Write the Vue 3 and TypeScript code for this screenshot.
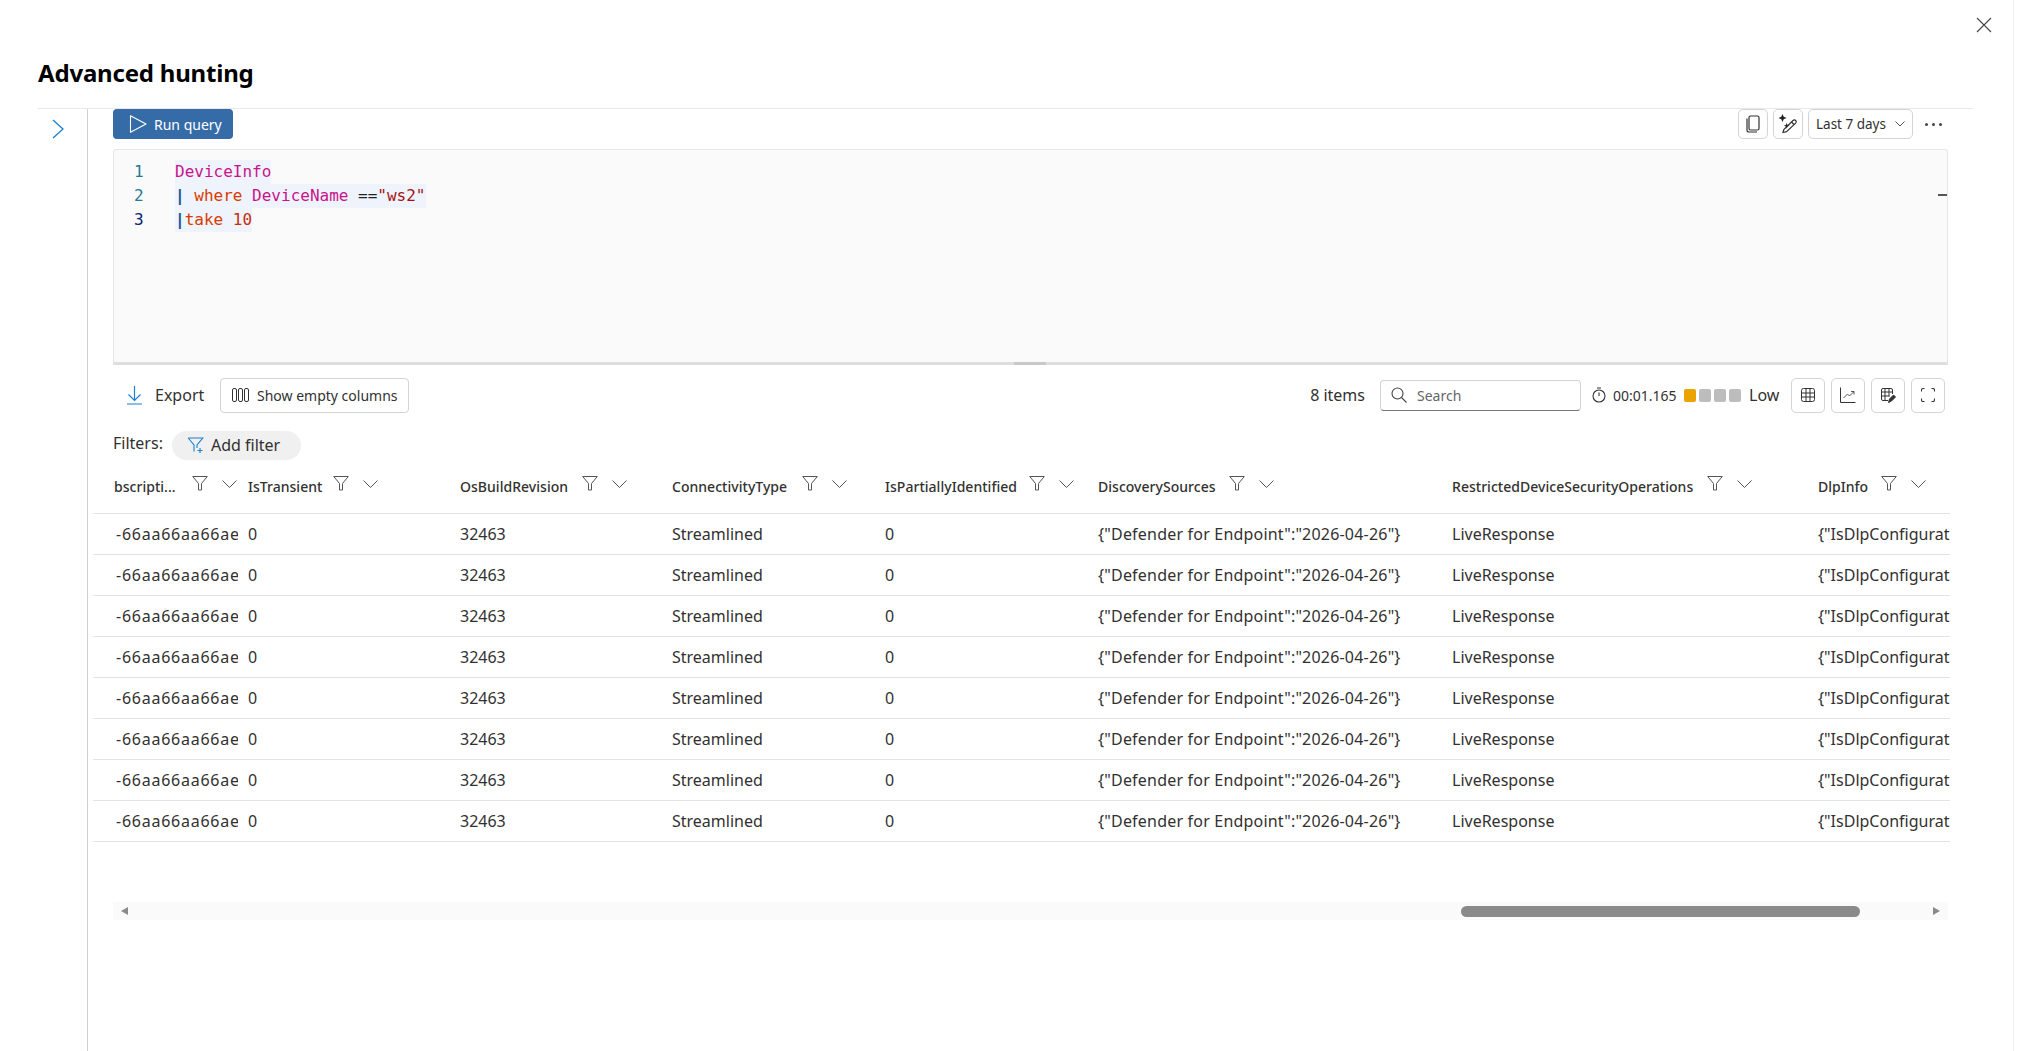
<script setup lang="ts">
interface Col { key: string; label: string; width: number; labelBox: number; value: string }
const cols: Col[] = [
  { key: 'sub', label: 'bscripti...', width: 147, labelBox: 77, value: '-66aa66aa66ae6' },
  { key: 'tr', label: 'IsTransient', width: 212, labelBox: 84, value: '0' },
  { key: 'os', label: 'OsBuildRevision', width: 212, labelBox: 121, value: '32463' },
  { key: 'con', label: 'ConnectivityType', width: 213, labelBox: 129, value: 'Streamlined' },
  { key: 'par', label: 'IsPartiallyIdentified', width: 213, labelBox: 143, value: '0' },
  { key: 'dis', label: 'DiscoverySources', width: 354, labelBox: 130, value: '{"Defender for Endpoint":"2026-04-26"}' },
  { key: 'res', label: 'RestrictedDeviceSecurityOperations', width: 366, labelBox: 254, value: 'LiveResponse' },
  { key: 'dlp', label: 'DlpInfo', width: 300, labelBox: 62, value: '{"IsDlpConfigurationEnabled":true}' },
]
const rows = Array.from({ length: 8 }, (_, i) => i)
</script>

<template>
  <div class="page">
    <button class="close" aria-label="Close">
      <svg width="16" height="16" viewBox="0 0 16 16"><path d="M1 1l14 14M15 1L1 15" stroke="#444" stroke-width="1.1" fill="none" /></svg>
    </button>
    <h1 class="title">Advanced hunting</h1>
    <div class="body">
      <aside class="side">
        <svg class="side-chev" width="12" height="20" viewBox="0 0 12 20"><path d="M1 1l10 9-10 9" stroke="#1b7fd1" stroke-width="1.3" fill="none" /></svg>
      </aside>
      <main class="main">
        <div class="qbar">
          <button class="run">
            <svg width="18" height="18" viewBox="0 0 18 18"><path d="M1.500 .8v16.400L17 9z" stroke="#fff" stroke-width="1.100" fill="none" stroke-linejoin="round" /></svg>
            <span>Run query</span>
          </button>
          <div class="qright">
            <button class="ibtn">
              <svg width="16" height="18" viewBox="0 0 16 18" fill="none" stroke="#333" stroke-width="1.200"><rect x="4" y="1" width="10" height="14" rx="1.500" /><path d="M2 3.500v11.500c0 1.200.8 2 2 2h8" /></svg>
            </button>
            <button class="ibtn">
              <svg width="20" height="20" viewBox="0 0 20 20" fill="none" stroke="#333" stroke-width="1.200"><path d="M4.500 0l1.200 2.800L8.500 4 5.700 5.200 4.500 8 3.300 5.200.5 4l2.800-1.200z" fill="#222" stroke="none" /><path d="M8.700 8.700l.8 2.200 2.200.8-2.200.8-.8 2.200-.8-2.200-2.200-.8 2.200-.8z" fill="#222" stroke="none" /><path d="M5 18.500l.8-3L15 6.500c.8-.8 2-.8 2.700 0s.7 1.900 0 2.600L8.500 17.700z" /><path d="M13.500 8l2.500 2.500" /></svg>
            </button>
            <button class="range">
              <span>Last 7 days</span>
              <svg width="10" height="6" viewBox="0 0 10 6"><path d="M.5.5L5 5 9.500.5" stroke="#555" stroke-width="1" fill="none" /></svg>
            </button>
            <div class="dots"><i></i><i></i><i></i></div>
          </div>
        </div>

        <div class="editor">
          <div class="eline"><span class="ln">1</span><span class="code"><span class="tbl">DeviceInfo</span></span></div>
          <div class="eline"><span class="ln">2</span><span class="code"><span class="pipe">|</span> <span class="kw">where</span> <span class="tbl">DeviceName</span> <span class="op">==</span><span class="str">"ws2"</span></span></div>
          <div class="eline"><span class="ln dark">3</span><span class="code"><span class="pipe">|</span><span class="kw">take</span> <span class="num">10</span> </span></div>
          <span class="mark"></span>
          <span class="grip"></span>
        </div>

        <div class="tools">
          <button class="export">
            <svg width="15" height="20" viewBox="0 0 15 20" fill="none" stroke="#1b7fd1" stroke-width="1.200"><path d="M7.500 1v14M1.500 9.500l6 6 6-6M0 19h15" /></svg>
            <span>Export</span>
          </button>
          <button class="empty">
            <svg width="18" height="14" viewBox="0 0 18 14" fill="none" stroke="#333" stroke-width="1"><rect x=".5" y=".5" width="4" height="13" rx="1.500" /><rect x="6.500" y=".5" width="4" height="13" rx="1.500" /><rect x="12.500" y=".5" width="4" height="13" rx="1.500" /></svg>
            <span>Show empty columns</span>
          </button>
          <div class="tools-right">
            <span class="items">8 items</span>
            <div class="search">
              <svg width="16" height="16" viewBox="0 0 16 16" fill="none" stroke="#444" stroke-width="1.100"><circle cx="6.500" cy="6.500" r="5.500" /><path d="M10.500 10.500l5 5" /></svg>
              <span>Search</span>
            </div>
            <svg class="timer" width="14" height="16" viewBox="0 0 14 16" fill="none" stroke="#333" stroke-width="1.100"><circle cx="7" cy="9" r="6" /><path d="M7 9V5.500M5 1h4" /></svg>
            <span class="time">00:01.165</span>
            <div class="bars"><i class="on"></i><i></i><i></i><i></i></div>
            <span class="low">Low</span>
            <button class="sq">
              <svg width="14" height="14" viewBox="0 0 14 14" fill="none" stroke="#333" stroke-width="1"><rect x=".5" y=".5" width="13" height="13" rx="2" /><path d="M.5 5h13M.5 9h13M5 .5v13M9 .5v13" /></svg>
            </button>
            <button class="sq">
              <svg width="16" height="16" viewBox="0 0 16 16" fill="none" stroke="#333" stroke-width="1"><path d="M.5.5v15h15" /><path d="M3.500 11l4-4 2 2L14 4.500M11 4.500h3v3" stroke="#555" /></svg>
            </button>
            <button class="sq">
              <svg width="16" height="16" viewBox="0 0 16 16" fill="none" stroke="#333" stroke-width="1"><path d="M8 13.500H3A1.500 1.500 0 0 1 1.500 12V3A1.500 1.500 0 0 1 3 1.500h8A1.500 1.500 0 0 1 12.500 3v4M1.500 5h11M1.500 9h8M5 1.500v12M9 1.500v8" /><path d="M8.500 15.500l1-3.500 4-4 2 2-4 4z" fill="#333" /></svg>
            </button>
            <button class="sq">
              <svg width="14" height="14" viewBox="0 0 14 14" fill="none" stroke="#333" stroke-width="1.100"><path d="M.5 3.500V2A1.500 1.500 0 0 1 2 .5h1.500M10.500 .5H12A1.500 1.500 0 0 1 13.500 2v1.500M13.500 10.500V12a1.500 1.500 0 0 1-1.500 1.500h-1.500M3.500 13.500H2A1.500 1.500 0 0 1 .5 12v-1.500" /></svg>
            </button>
          </div>
        </div>

        <div class="filters">
          <span class="flabel">Filters:</span>
          <button class="add">
            <svg width="17" height="16" viewBox="0 0 16 16" fill="none" stroke="#1b7fd1" stroke-width="1.100"><path d="M.7 1h14.600L9.500 8v3M6.500 14.500V8L.7 1" /><path d="M10 13.500h5M12.500 11v5" /></svg>
            <span>Add filter</span>
          </button>
        </div>

        <div class="table">
          <div class="thead">
            <div v-for="c in cols" :key="c.key" class="th" :style="{ width: c.width + 'px' }">
              <span class="tlabel" :style="{ width: c.labelBox + 'px' }">{{ c.label }}</span>
              <svg class="funnel" width="16" height="15" viewBox="0 0 16 15" fill="none" stroke="#555" stroke-width="1"><path d="M.7.5h14.600L9.500 7.500v6.500h-3V7.500z" /></svg>
              <svg class="chev" width="15" height="9" viewBox="0 0 15 9" fill="none" stroke="#555" stroke-width="1"><path d="M.5.5l7 7 7-7" /></svg>
            </div>
          </div>
          <div v-for="r in rows" :key="r" class="tr">
            <div v-for="c in cols" :key="c.key" class="td" :class="'c-' + c.key" :style="{ width: c.width + 'px' }"><span class="cell">{{ c.value }}</span></div>
          </div>
        </div>

        <div class="hscroll">
          <span class="arrow left"></span>
          <span class="thumb"></span>
          <span class="arrow right"></span>
        </div>
      </main>
    </div>
  </div>
</template>

<style>
html, body { margin: 0; background: #fff; overflow: hidden; }
</style>

<style scoped>
.page {
  position: relative;
  width: 2014px;
  height: 1051px;
  box-sizing: border-box;
  overflow: hidden;
  background: #fff;
  font-family: "Noto Sans", "Open Sans", sans-serif;
  color: #323130;
  padding-top: 56px;
  border-right: 1px solid #efefef;
}
button { font: inherit; color: inherit; background: #fff; padding: 0; margin: 0; }
.close { position: absolute; left: 1976px; top: 17px; border: 0; background: none; display: flex; }
.title {
  margin: 0 0 0 38px;
  height: 53px;
  box-sizing: border-box;
  width: 1935px;
  border-bottom: 1px solid #e8e8e8;
  font-size: 24px;
  line-height: 33px;
  font-weight: 700;
  letter-spacing: -0.2px;
  color: #000;
}
.body { display: flex; height: 942px; }
.side { width: 88px; flex: none; position: relative; box-sizing: border-box; border-right: 1px solid #cfcfcf; }
.side-chev { position: absolute; left: 52px; top: 10px; }
.main { flex: 1; min-width: 0; overflow: hidden; }
.qbar { display: flex; justify-content: space-between; align-items: center; height: 30px; width: 1835px; margin-left: 25px; }
.run {
  width: 120px; height: 30px; border: 0; border-radius: 4px; background: #356ca8; color: #fff;
  display: flex; align-items: center; gap: 7px; padding-left: 16px; box-sizing: border-box; font-size: 14px; white-space: nowrap;
}
.qright { display: flex; align-items: center; gap: 5px; }
.ibtn { width: 30px; height: 30px; box-sizing: border-box; border: 1px solid #d4d4d4; border-radius: 5px; display: flex; align-items: center; justify-content: center; }
.range {
  width: 105px; height: 30px; box-sizing: border-box; border: 1px solid #d4d4d4; border-radius: 5px;
  display: flex; align-items: center; justify-content: space-between; padding: 0 7px; font-size: 13.500px; white-space: nowrap;
}
.dots { display: flex; gap: 4px; margin-left: 7px; margin-right: 6px; }
.dots i { width: 3px; height: 3px; border-radius: 50%; background: #444; display: block; }
.editor {
  position: relative;
  margin: 10px 0 0 25px;
  width: 1835px;
  height: 216px;
  box-sizing: border-box;
  background: #fafafa;
  border: 1px solid #e6e6e6;
  border-bottom: 3px solid #dedede;
  border-radius: 3px 3px 0 0;
  padding-top: 10px;
  font-family: "DejaVu Sans Mono", "Liberation Mono", monospace;
  font-size: 16px;
}
.eline { display: flex; height: 24px; line-height: 24px; }
.ln { width: 61px; padding-left: 20px; box-sizing: border-box; color: #237893; flex: none; }
.ln.dark { color: #0b216f; }
.code { background: #eff3fb; white-space: pre; }
.tbl { color: #c8148c; }
.kw { color: #d83b01; }
.op { color: #222; }
.str { color: #a31515; }
.num { color: #c72e0f; }
.pipe { color: #0e4f92; font-weight: 700; }
.mark { position: absolute; right: 0; top: 44px; width: 9px; height: 2px; background: #555; }
.grip { position: absolute; left: 900px; bottom: -3px; width: 32px; height: 3px; background: #c8c8c8; }
.tools { display: flex; align-items: center; height: 36px; margin: 12px 0 0 25px; width: 1835px; }
.export { border: 0; display: flex; align-items: center; gap: 13px; margin-left: 14px; margin-right: 1px; font-size: 16px; background: none; white-space: nowrap; }
.empty {
  margin-left: 15px; height: 35px; width: 189px; box-sizing: border-box; border: 1px solid #d4d4d4; border-radius: 4px;
  display: flex; align-items: center; justify-content: center; gap: 7px; font-size: 14px; white-space: nowrap;
}
.tools-right { margin-left: auto; display: flex; align-items: center; white-space: nowrap; margin-right: 3px; }
.items { font-size: 16px; margin-right: 15px; }
.search {
  width: 201px; height: 31px; box-sizing: border-box; border: 1px solid #d4d4d4; border-bottom: 1px solid #777; border-radius: 4px;
  display: flex; align-items: center; gap: 10px; padding-left: 10px; font-size: 14px; color: #666; margin-right: 11px;
}
.timer { margin-right: 7px; }
.time { font-size: 14px; width: 71px; }
.bars { display: flex; gap: 3px; margin-right: 8px; }
.bars i { width: 12px; height: 13px; border-radius: 2px; background: #bdbdbd; display: block; }
.bars i.on { background: #eaa300; }
.low { font-size: 16px; width: 42px; }
.sq { width: 34px; height: 35px; box-sizing: border-box; border: 1px solid #d4d4d4; border-radius: 5px; display: flex; align-items: center; justify-content: center; margin-right: 6px; }
.sq:last-child { margin-right: 0; }
.filters { display: flex; align-items: center; height: 30px; margin: 17px 0 0 25px; }
.flabel { font-size: 16px; width: 59px; position: relative; top: -2px; }
.add {
  width: 129px; height: 29px; border: 0; border-radius: 15px; background: #f0f0f0;
  display: flex; align-items: center; gap: 7px; padding-left: 15px; box-sizing: border-box; font-size: 16px; white-space: nowrap;
}
.table { margin-left: 5px; width: 1857px; overflow: hidden; }
.thead, .tr { display: flex; width: max-content; }
.thead { height: 53px; align-items: center; border-bottom: 1px solid #e3e3e3; }
.tr { height: 40px; align-items: center; border-bottom: 1px solid #e3e3e3; }
.th, .td { flex: none; box-sizing: border-box; padding-left: 8px; white-space: nowrap; overflow: hidden; }
.th { display: flex; align-items: center; position: relative; font-size: 14px; font-weight: 500; height: 100%; }
.th:first-child { padding-left: 21px; }
.tlabel { flex: none; letter-spacing: 0.03px; }
.funnel { margin-top: -6px; margin-left: 1px; flex: none; }
.chev { margin-left: 14px; margin-top: -4px; flex: none; }
.td { font-size: 16px; }
.td:first-child { padding-left: 23px; }
.c-sub .cell { display: block; width: 122px; overflow: hidden; letter-spacing: 0.75px; }
.c-dis .cell { letter-spacing: 0.2px; }
.hscroll {
  margin: 60px 0 0 25px; width: 1835px; height: 18px; background: #fafafa; position: relative;
}
.thumb { position: absolute; left: 1348px; top: 4px; width: 399px; height: 11px; border-radius: 6px; background: #8a8a8a; }
.arrow { position: absolute; top: 5px; width: 0; height: 0; border-top: 4.500px solid transparent; border-bottom: 4.500px solid transparent; }
.arrow.left { left: 8px; border-right: 7px solid #8a8a8a; }
.arrow.right { right: 8px; border-left: 7px solid #8a8a8a; }
</style>
